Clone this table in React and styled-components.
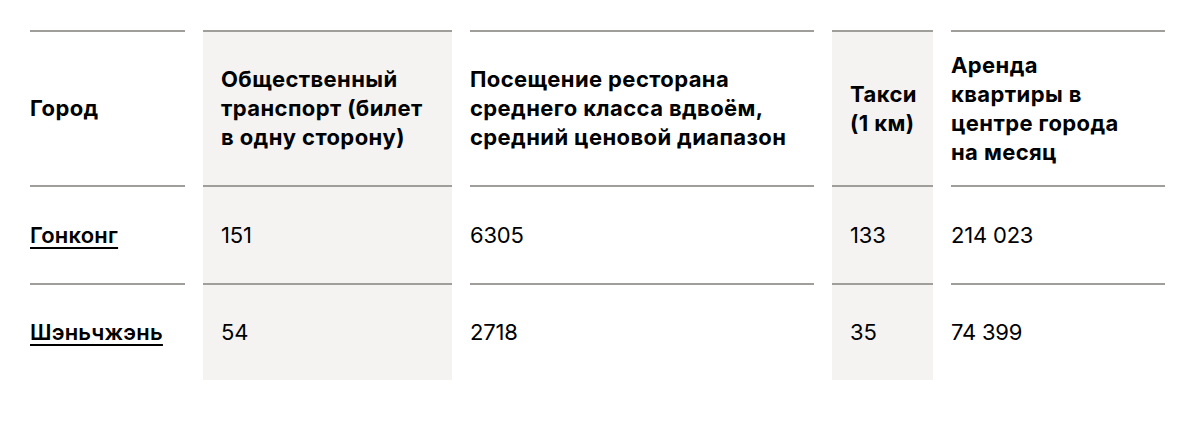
import React from 'react';
import styled, { createGlobalStyle } from 'styled-components';

const GlobalStyle = createGlobalStyle`
  body {
    margin: 0;
    background: #fff;
    font-family: Inter, "Noto Sans", Arial, sans-serif;
    color: #000;
  }
`;

const columns = [
  { title: ['Город'], shaded: false },
  { title: ['Общественный', 'транспорт (билет', 'в одну сторону)'], shaded: true },
  { title: ['Посещение ресторана', 'среднего класса вдвоём,', 'средний ценовой диапазон'], shaded: false },
  { title: ['Такси', '(1 км)'], shaded: true },
  { title: ['Аренда', 'квартиры в', 'центре города', 'на месяц'], shaded: false },
];

const rows = [
  ['Гонконг', '151', '6305', '133', '214 023'],
  ['Шэньчжэнь', '54', '2718', '35', '74 399'],
];

const Wrapper = styled.div`
  padding: 30px;
`;

const Table = styled.div`
  display: grid;
  grid-template-columns: 155px 249px 344px 101px 214px;
  column-gap: 18px;
`;

const Cell = styled.div`
  box-sizing: border-box;
  display: flex;
  align-items: center;
  height: ${p => p.$height}px;
  padding: 0 ${p => (p.$shaded ? 18 : 0)}px;
  background: ${p => (p.$shaded ? '#f4f3f1' : 'transparent')};
  border-top: 2px solid #a09e9b;
  font-size: 22px;
  line-height: 29px;
`;

const HeadText = styled.div`
  font-weight: 700;
  white-space: nowrap;
  letter-spacing: 0.4px;
`;

const CityLink = styled.a`
  color: #000;
  text-decoration: underline;
  text-decoration-thickness: 2px;
  text-underline-offset: 4px;
  font-weight: 600;
  letter-spacing: 0.2px;
`;

const Value = styled.span`
  font-weight: 400;
  letter-spacing: -0.2px;
`;

export default function App() {
  return (
    <>
      <GlobalStyle />
      <Wrapper>
        <Table>
          {columns.map((col, i) => (
            <Cell key={`h${i}`} $height={155} $shaded={col.shaded}>
              <HeadText>
                {col.title.map((line, j) => (
                  <div key={j}>{line}</div>
                ))}
              </HeadText>
            </Cell>
          ))}
          {rows.map((row, r) =>
            row.map((value, c) => (
              <Cell
                key={`${r}-${c}`}
                $height={r === rows.length - 1 ? 97 : 98}
                $shaded={columns[c].shaded}
              >
                {c === 0 ? <CityLink href="#">{value}</CityLink> : <Value>{value}</Value>}
              </Cell>
            ))
          )}
        </Table>
      </Wrapper>
    </>
  );
}
